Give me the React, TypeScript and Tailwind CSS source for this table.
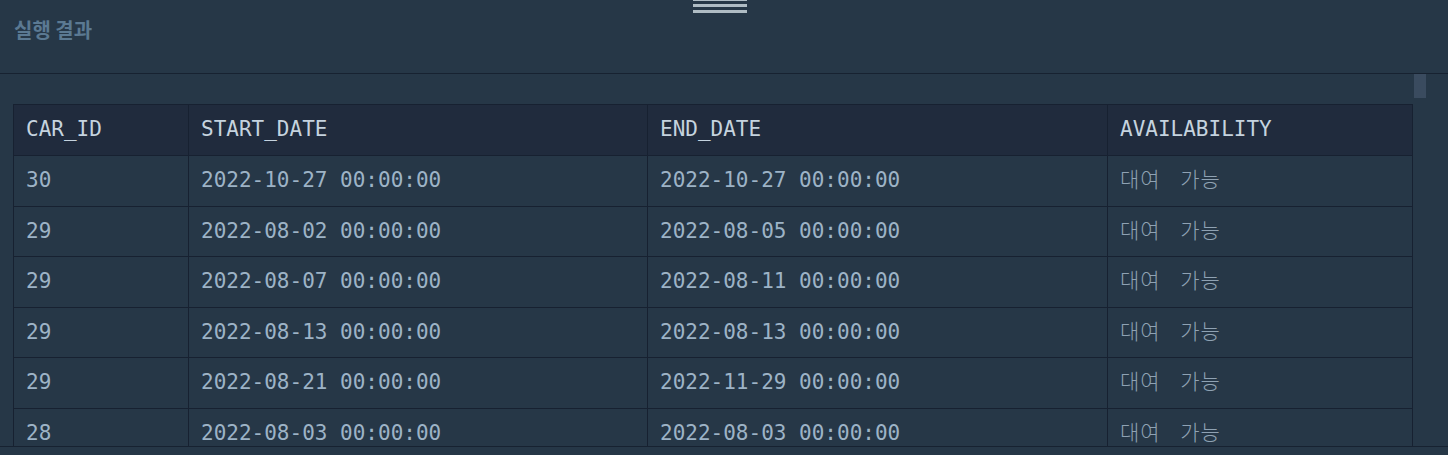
import React from "react";

const rows = [
  ["30", "2022-10-27 00:00:00", "2022-10-27 00:00:00", "대여 가능"],
  ["29", "2022-08-02 00:00:00", "2022-08-05 00:00:00", "대여 가능"],
  ["29", "2022-08-07 00:00:00", "2022-08-11 00:00:00", "대여 가능"],
  ["29", "2022-08-13 00:00:00", "2022-08-13 00:00:00", "대여 가능"],
  ["29", "2022-08-21 00:00:00", "2022-11-29 00:00:00", "대여 가능"],
  ["28", "2022-08-03 00:00:00", "2022-08-03 00:00:00", "대여 가능"],
  ["28", "2022-08-05 00:00:00", "2022-08-06 00:00:00", "대여 가능"],
];

const mono = { fontFamily: '"DejaVu Sans Mono", "Noto Sans CJK KR", monospace' };

export default function App() {
  return (
    <div className="w-[1448px] h-[455px] bg-[#263747] flex flex-col overflow-hidden relative">
      <div className="absolute left-[693px] -top-[2px] w-[54px] flex flex-col gap-[3px]">
        <div className="h-[3px] bg-[#afbcc4]" />
        <div className="h-[3px] bg-[#afbcc4]" />
        <div className="h-[3px] bg-[#afbcc4]" />
      </div>
      <div className="h-[74px] shrink-0 border-b border-[#172231] px-[14px] pt-[17px]">
        <span
          className="text-[20px] font-bold text-[#5b7992] leading-[26px]"
          style={{ fontFamily: '"Noto Sans CJK KR", "Noto Sans", sans-serif' }}
        >
          실행 결과
        </span>
      </div>
      <div className="h-[373px] shrink-0 flex border-b border-[#172231]">
        <div className="flex-1 overflow-hidden pl-[13px] pt-[30px]">
          <table className="w-full border-collapse table-fixed" style={mono}>
            <colgroup>
              <col className="w-[175px]" />
              <col className="w-[459px]" />
              <col className="w-[460px]" />
              <col />
            </colgroup>
            <thead>
              <tr className="h-[51px] bg-[#202b3d]">
                {["CAR_ID", "START_DATE", "END_DATE", "AVAILABILITY"].map((h) => (
                  <th
                    key={h}
                    className="border border-[#172131] px-[12px] text-left font-normal text-[21px] text-[#c5d3df]"
                  >
                    {h}
                  </th>
                ))}
              </tr>
            </thead>
            <tbody>
              {rows.map((r, i) => (
                <tr key={i} className="h-[50.6px]">
                  {r.map((c, j) => (
                    <td
                      key={j}
                      className={
                        "border border-[#172131] px-[12px] text-[21px] " +
                        (j === 3
                          ? "text-[#8fa2b3] font-light tracking-[1px] [word-spacing:6px]"
                          : "text-[#9db3c6]")
                      }
                    >
                      {c}
                    </td>
                  ))}
                </tr>
              ))}
            </tbody>
          </table>
        </div>
        <div className="w-[14px] shrink-0 pl-[1px]">
          <div className="w-[12px] h-[24px] bg-[#3a4b5f]" />
        </div>
        <div className="w-[21px] shrink-0" />
      </div>
    </div>
  );
}
